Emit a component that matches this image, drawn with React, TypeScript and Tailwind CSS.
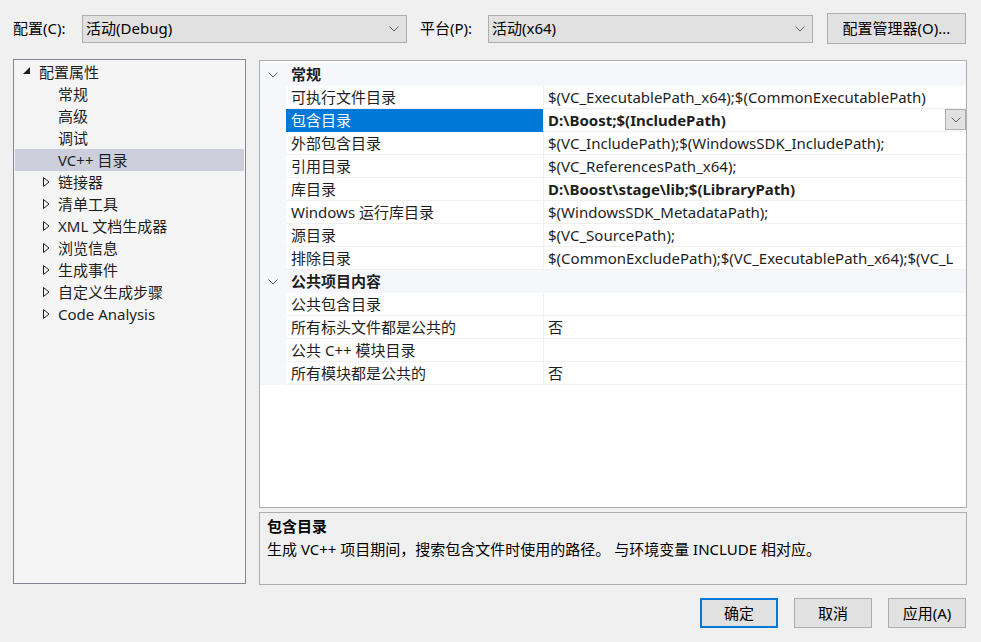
const FONT = "font-['Noto_Sans','Noto_Sans_CJK_SC',sans-serif]";

function Chevron({ className = "" }: { className?: string }) {
  return (
    <svg className={className} width="10" height="6" viewBox="0 0 10 6" fill="none">
      <polyline points="0.5,0.5 5,5 9.5,0.5" stroke="#606060" strokeWidth="1" />
    </svg>
  );
}

function Combo({ text, width }: { text: string; width: string }) {
  return (
    <div className={`${width} h-[28px] bg-[#e1e1e1] border border-[#adadad] flex items-center pl-[3px] pr-[7px]`}>
      <span className="flex-1 text-[15px] text-black">{text}</span>
      <Chevron />
    </div>
  );
}

function Expanded() {
  return (
    <svg width="8" height="8" viewBox="0 0 8 8">
      <polygon points="7,0 7,7 0,7" fill="#1e1e1e" />
    </svg>
  );
}

function Collapsed() {
  return (
    <svg width="7" height="10" viewBox="0 0 7 10" fill="none">
      <polygon points="0.5,0.5 6,5 0.5,9.5" stroke="#1e1e1e" strokeWidth="1" />
    </svg>
  );
}

const treeChildren = ["常规", "高级", "调试", "VC++ 目录"];
const treeCollapsed = ["链接器", "清单工具", "XML 文档生成器", "浏览信息", "生成事件", "自定义生成步骤", "Code Analysis"];

type Prop = { name: string; value: string; bold?: boolean; selected?: boolean };

const general: Prop[] = [
  { name: "可执行文件目录", value: "$(VC_ExecutablePath_x64);$(CommonExecutablePath)" },
  { name: "包含目录", value: "D:\\Boost;$(IncludePath)", bold: true, selected: true },
  { name: "外部包含目录", value: "$(VC_IncludePath);$(WindowsSDK_IncludePath);" },
  { name: "引用目录", value: "$(VC_ReferencesPath_x64);" },
  { name: "库目录", value: "D:\\Boost\\stage\\lib;$(LibraryPath)", bold: true },
  { name: "Windows 运行库目录", value: "$(WindowsSDK_MetadataPath);" },
  { name: "源目录", value: "$(VC_SourcePath);" },
  { name: "排除目录", value: "$(CommonExcludePath);$(VC_ExecutablePath_x64);$(VC_L" },
];

const shared: Prop[] = [
  { name: "公共包含目录", value: "" },
  { name: "所有标头文件都是公共的", value: "否" },
  { name: "公共 C++ 模块目录", value: "" },
  { name: "所有模块都是公共的", value: "否" },
];

function Category({ title }: { title: string }) {
  return (
    <div className="h-[23px] flex items-center bg-[#f5f7fa]">
      <div className="w-[26px] flex justify-center">
        <Chevron />
      </div>
      <span className="pl-[5px] font-bold text-[15px] text-[#1e1e1e]">{title}</span>
    </div>
  );
}

function Row({ p }: { p: Prop }) {
  return (
    <div className="h-[23px] flex bg-[#f5f7fa]">
      <div className="w-[26px] shrink-0" />
      <div
        className={`w-[258px] shrink-0 flex items-center pl-[5px] border-b border-r border-[#f0f0f0] ${
          p.selected ? "bg-[#0078d7] text-white border-b-[#0078d7]" : "bg-white text-[#1e1e1e]"
        }`}
      >
        <span className="whitespace-nowrap">{p.name}</span>
      </div>
      <div className="flex-1 min-w-0 flex items-center bg-white border-b border-[#f0f0f0] relative">
        <span className={`pl-[4px] whitespace-nowrap overflow-hidden ${p.bold ? "font-bold" : ""} text-[#1e1e1e]`}>
          {p.value}
        </span>
        {p.selected && (
          <div className="absolute right-0 top-0 w-[21px] h-[21px] bg-[#e1e1e1] border border-[#adadad] flex items-center justify-center">
            <Chevron />
          </div>
        )}
      </div>
    </div>
  );
}

function Btn({ label, primary }: { label: string; primary?: boolean }) {
  return (
    <div
      className={`w-[78px] h-[30px] bg-[#e1e1e1] flex items-center justify-center text-[15px] text-black ${
        primary ? "border-2 border-[#0078d7]" : "border border-[#adadad]"
      }`}
    >
      {label}
    </div>
  );
}

export default function App() {
  return (
    <div className={`${FONT} w-[981px] h-[642px] bg-[#f0f0f0] text-[15px] text-[#1e1e1e] overflow-hidden`}>
      {/* Top bar */}
      <div className="flex items-center h-[31px] mt-[13px]">
        <span className="ml-[13px] w-[69px] text-black">配置(C):</span>
        <Combo text="活动(Debug)" width="w-[325px]" />
        <span className="ml-[13px] w-[68px] text-black">平台(P):</span>
        <Combo text="活动(x64)" width="w-[325px]" />
        <div className="ml-[14px] w-[139px] h-[31px] bg-[#e1e1e1] border border-[#adadad] flex items-center justify-center text-black">
          配置管理器(O)...
        </div>
      </div>

      {/* Main */}
      <div className="flex mt-[15px] ml-[13px] h-[526px]">
        {/* Tree */}
        <div className="w-[233px] h-[525px] bg-[#f5f5f5] border border-[#828790] pt-[1px] px-[1px]">
          <div className="h-[22px] flex items-center">
            <div className="w-[24px] flex justify-end pr-[8px] pb-[2px]">
              <Expanded />
            </div>
            <span>配置属性</span>
          </div>
          {treeChildren.map((t) => (
            <div
              key={t}
              className={`h-[22px] flex items-center pl-[43px] ${t === "VC++ 目录" ? "bg-[#cccedb]" : ""}`}
            >
              {t}
            </div>
          ))}
          {treeCollapsed.map((t) => (
            <div key={t} className="h-[22px] flex items-center">
              <div className="w-[43px] flex justify-end pr-[8px]">
                <Collapsed />
              </div>
              <span>{t}</span>
            </div>
          ))}
        </div>

        {/* Right column */}
        <div className="ml-[13px] w-[708px] flex flex-col">
          <div className="h-[448px] mt-[1px] bg-white border border-[#adadad] pt-[2px] overflow-hidden">
            <Category title="常规" />
            {general.map((p) => (
              <Row key={p.name} p={p} />
            ))}
            <Category title="公共项目内容" />
            {shared.map((p) => (
              <Row key={p.name} p={p} />
            ))}
          </div>
          <div className="mt-[4px] h-[73px] border border-[#adadad] bg-[#f0f0f0] px-[7px] pt-[2px]">
            <div className="font-bold text-black h-[23px] flex items-center">包含目录</div>
            <div className="text-black h-[23px] flex items-center">
              生成 VC++ 项目期间，搜索包含文件时使用的路径。 与环境变量 INCLUDE 相对应。
            </div>
          </div>
        </div>
      </div>

      {/* Bottom buttons */}
      <div className="flex justify-end gap-[16px] mr-[15px] mt-[13px]">
        <Btn label="确定" primary />
        <Btn label="取消" />
        <Btn label="应用(A)" />
      </div>
    </div>
  );
}
